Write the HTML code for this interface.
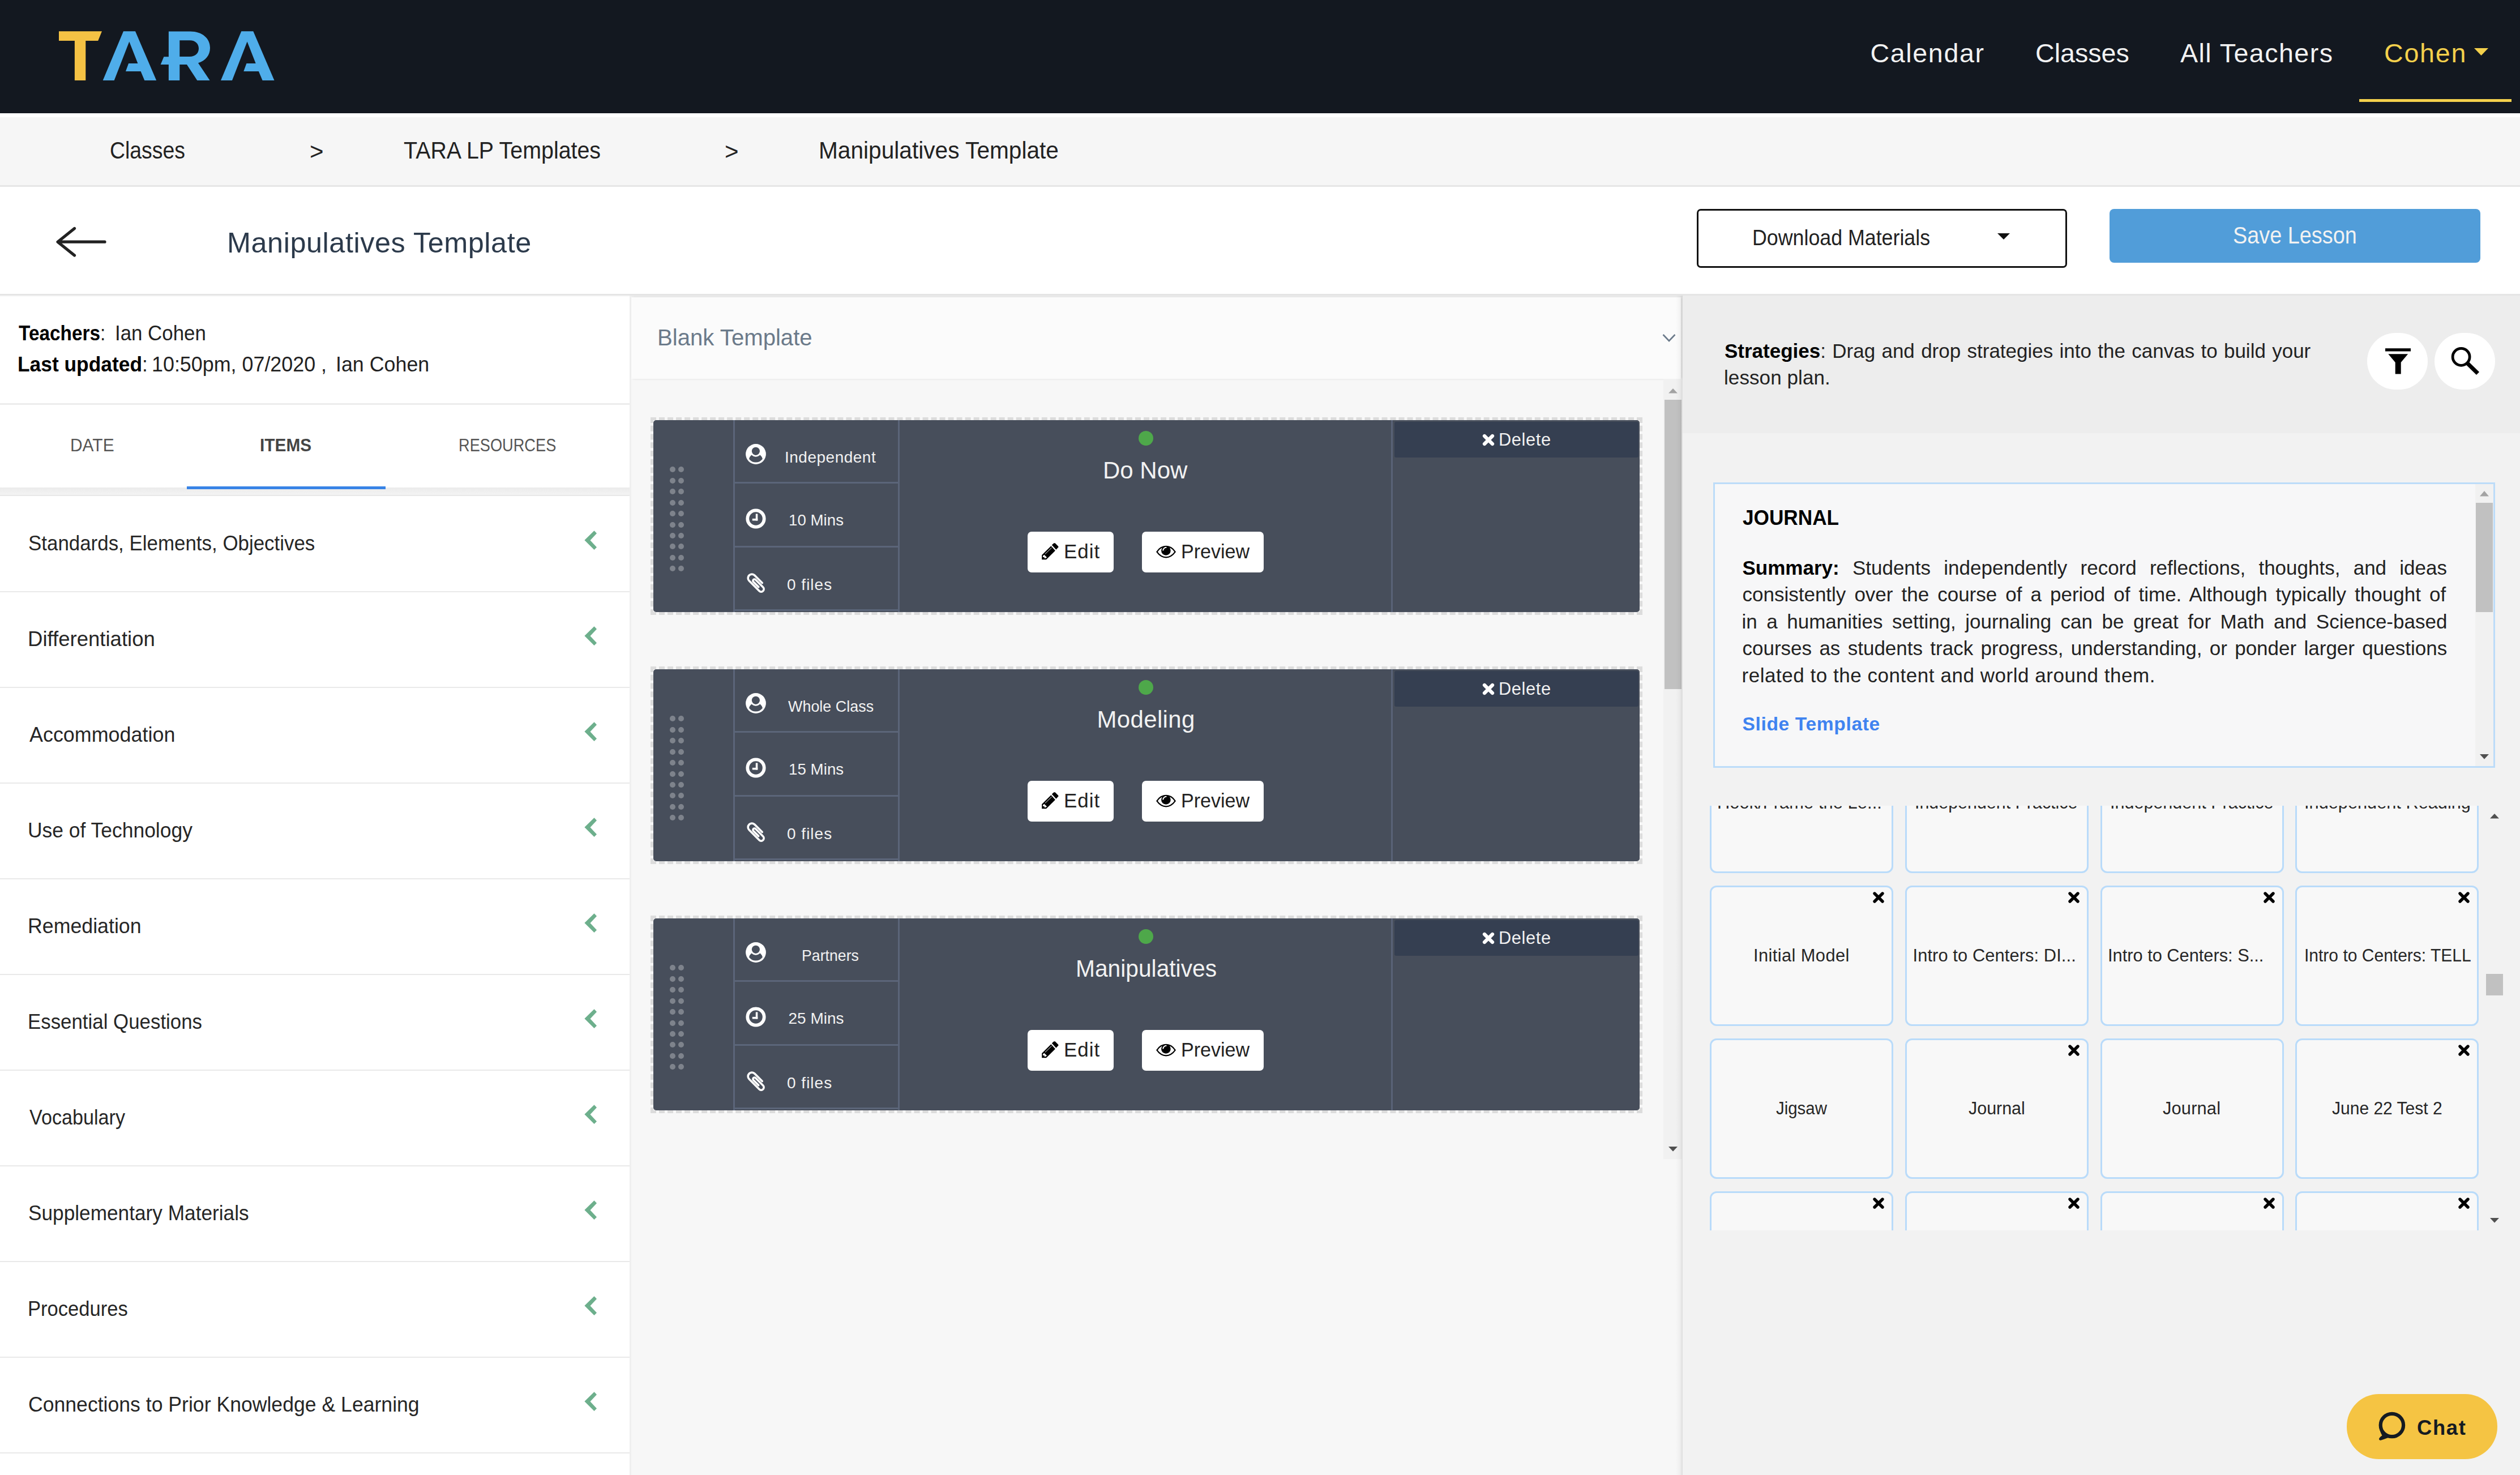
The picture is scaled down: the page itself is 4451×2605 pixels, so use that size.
<!DOCTYPE html><html><head><meta charset="utf-8"><title>TARA - Manipulatives Template</title><style>
*{margin:0;padding:0}
html,body{width:4451px;height:2605px;overflow:hidden;background:#fff}
body{position:relative;font-family:"Liberation Sans",sans-serif}
body div{position:absolute}
.t{white-space:nowrap;line-height:1}
.t b{font-weight:700}

</style></head><body>
<div style="left:0px;top:0px;width:4451px;height:200px;background:#131820;"></div>
<div style="left:0px;top:200px;width:4451px;height:7px;background:#ffffff;"></div>
<div style="left:0px;top:207px;width:4451px;height:120px;background:#f6f6f6;"></div>
<div style="left:0px;top:327px;width:4451px;height:3px;background:#e6e6e6;"></div>
<div style="left:0px;top:330px;width:4451px;height:189px;background:#ffffff;"></div>
<div style="left:0px;top:519px;width:4451px;height:3px;background:#e5e5e5;"></div>
<div style="left:0px;top:522px;width:1112px;height:2083px;background:#ffffff;"></div>
<div style="left:0px;top:522px;width:1112px;height:2px;background:#f8f8f8;"></div>
<div style="left:1112px;top:522px;width:3px;height:2083px;background:#efefef;"></div>
<div style="left:1115px;top:522px;width:1857px;height:2083px;background:#f7f7f7;"></div>
<div style="left:1115px;top:522px;width:1857px;height:3px;background:#efefef;"></div>
<div style="left:1115px;top:525px;width:1854px;height:144px;background:#fbfbfb;box-shadow: 2px 0 4px rgba(0,0,0,0.10);"></div>
<div style="left:2972px;top:522px;width:1479px;height:2083px;background:#f2f2f2;"></div>
<div style="left:2972px;top:522px;width:1479px;height:243px;background:#ededed;"></div>
<svg style="position:absolute;left:0px;top:0px;overflow:visible" width="500" height="200" viewBox="0 0 500 200">
<polygon fill="#f5c244" points="104,55.3 180,55.3 173.2,72 151.3,72 151.3,142 131.9,142 131.9,72 104,72"/>
<polygon fill="#4fadea" points="181.7,142 218,55.3 239,55.3 276.2,142 255.3,142 248.6,126 222,126 227.1,112 243.4,112 228.3,73.6 201.7,142"/>
<path fill="#4fadea" fill-rule="evenodd" d="M297.9,55.5 H336 C357,55.5 371,67.5 371,84.5 C371,97.5 363,107.5 350,111.3 L370.6,142 H348.3 L330,114.1 H317.3 V142 H297.9 V114.1 H283.7 L289.4,100.2 H297.9 Z M317.3,71.2 H335 C345.5,71.2 351,77.5 351,85.6 C351,94 345.5,100 335,100 H317.3 Z"/>
<polygon fill="#4fadea" transform="translate(208.3,0)" points="181.7,142 218,55.3 239,55.3 276.2,142 255.3,142 248.6,126 222,126 227.1,112 243.4,112 228.3,73.6 201.7,142"/>
</svg>
<svg style="position:absolute;left:4370px;top:85px;overflow:visible" width="25" height="13" viewBox="0 0 25 13"><polygon fill="#f4d04c" points="0,0 25,0 12.5,13"/></svg>
<div style="left:4167px;top:175px;width:269px;height:5px;background:#f4d04c;"></div>
<svg style="position:absolute;left:95px;top:396px;overflow:visible" width="100" height="62" viewBox="0 0 100 62"><path d="M90,31.2 H8 M36.5,7.5 L7,31.2 L36.5,55" fill="none" stroke="#222" stroke-width="5.2" stroke-linecap="round" stroke-linejoin="round"/></svg>
<div style="left:2996.6px;top:369px;width:654px;height:104px;background:#ffffff;box-sizing:border-box;border:3px solid #111;border-radius:7px;"></div>
<svg style="position:absolute;left:3528px;top:412px;overflow:visible" width="22" height="11" viewBox="0 0 22 11"><polygon fill="#111" points="0,0 22,0 11,11"/></svg>
<div style="left:3726px;top:369px;width:655px;height:95px;background:#519dd9;border-radius:8px;"></div>
<div style="left:0px;top:712px;width:1112px;height:3px;background:#ececec;"></div>
<div style="left:0px;top:861px;width:1112px;height:14px;background:linear-gradient(#ebebeb,#f4f4f4);"></div>
<div style="left:0px;top:874px;width:1112px;height:2px;background:#e8e8e8;"></div>
<div style="left:330px;top:858.5px;width:351px;height:5.5px;background:#3783e6;"></div>
<svg style="position:absolute;left:1030px;top:935.6px;overflow:visible" width="26" height="36" viewBox="0 0 26 36"><polygon fill="#6daf8c" points="19.5,1.3 24,5.9 12.5,18.3 24,30.5 19.5,35.1 2.4,18.1"/></svg>
<div style="left:0px;top:1043.6px;width:1112px;height:2.5px;background:#e9e9e9;"></div>
<svg style="position:absolute;left:1030px;top:1104.6px;overflow:visible" width="26" height="36" viewBox="0 0 26 36"><polygon fill="#6daf8c" points="19.5,1.3 24,5.9 12.5,18.3 24,30.5 19.5,35.1 2.4,18.1"/></svg>
<div style="left:0px;top:1212.6px;width:1112px;height:2.5px;background:#e9e9e9;"></div>
<svg style="position:absolute;left:1030px;top:1273.6px;overflow:visible" width="26" height="36" viewBox="0 0 26 36"><polygon fill="#6daf8c" points="19.5,1.3 24,5.9 12.5,18.3 24,30.5 19.5,35.1 2.4,18.1"/></svg>
<div style="left:0px;top:1381.6px;width:1112px;height:2.5px;background:#e9e9e9;"></div>
<svg style="position:absolute;left:1030px;top:1442.6px;overflow:visible" width="26" height="36" viewBox="0 0 26 36"><polygon fill="#6daf8c" points="19.5,1.3 24,5.9 12.5,18.3 24,30.5 19.5,35.1 2.4,18.1"/></svg>
<div style="left:0px;top:1550.6px;width:1112px;height:2.5px;background:#e9e9e9;"></div>
<svg style="position:absolute;left:1030px;top:1611.6px;overflow:visible" width="26" height="36" viewBox="0 0 26 36"><polygon fill="#6daf8c" points="19.5,1.3 24,5.9 12.5,18.3 24,30.5 19.5,35.1 2.4,18.1"/></svg>
<div style="left:0px;top:1719.6px;width:1112px;height:2.5px;background:#e9e9e9;"></div>
<svg style="position:absolute;left:1030px;top:1780.6px;overflow:visible" width="26" height="36" viewBox="0 0 26 36"><polygon fill="#6daf8c" points="19.5,1.3 24,5.9 12.5,18.3 24,30.5 19.5,35.1 2.4,18.1"/></svg>
<div style="left:0px;top:1888.6px;width:1112px;height:2.5px;background:#e9e9e9;"></div>
<svg style="position:absolute;left:1030px;top:1949.6px;overflow:visible" width="26" height="36" viewBox="0 0 26 36"><polygon fill="#6daf8c" points="19.5,1.3 24,5.9 12.5,18.3 24,30.5 19.5,35.1 2.4,18.1"/></svg>
<div style="left:0px;top:2057.6px;width:1112px;height:2.5px;background:#e9e9e9;"></div>
<svg style="position:absolute;left:1030px;top:2118.6px;overflow:visible" width="26" height="36" viewBox="0 0 26 36"><polygon fill="#6daf8c" points="19.5,1.3 24,5.9 12.5,18.3 24,30.5 19.5,35.1 2.4,18.1"/></svg>
<div style="left:0px;top:2226.6px;width:1112px;height:2.5px;background:#e9e9e9;"></div>
<svg style="position:absolute;left:1030px;top:2287.6px;overflow:visible" width="26" height="36" viewBox="0 0 26 36"><polygon fill="#6daf8c" points="19.5,1.3 24,5.9 12.5,18.3 24,30.5 19.5,35.1 2.4,18.1"/></svg>
<div style="left:0px;top:2395.6px;width:1112px;height:2.5px;background:#e9e9e9;"></div>
<svg style="position:absolute;left:1030px;top:2456.6px;overflow:visible" width="26" height="36" viewBox="0 0 26 36"><polygon fill="#6daf8c" points="19.5,1.3 24,5.9 12.5,18.3 24,30.5 19.5,35.1 2.4,18.1"/></svg>
<div style="left:0px;top:2564.6px;width:1112px;height:2.5px;background:#e9e9e9;"></div>
<svg style="position:absolute;left:2935px;top:589px;overflow:visible" width="26" height="16" viewBox="0 0 26 16"><polyline points="2.5,2 13,13 23.5,2" fill="none" stroke="#6b7a8a" stroke-width="2.6"/></svg>
<div style="left:2938px;top:669px;width:33px;height:1378px;background:#f1f1f1;"></div>
<svg style="position:absolute;left:2947px;top:685.8px;overflow:visible" width="16" height="8.5" viewBox="0 0 16 8.5"><polygon fill="#a3a3a3" points="0,8.5 16,8.5 8,0"/></svg>
<div style="left:2940px;top:706px;width:30px;height:511px;background:#c1c1c1;"></div>
<svg style="position:absolute;left:2947px;top:2024.6px;overflow:visible" width="16" height="8.5" viewBox="0 0 16 8.5"><polygon fill="#505050" points="0,0 16,0 8,8.5"/></svg>
<div style="left:2960px;top:522px;width:12px;height:2083px;background:linear-gradient(to right, rgba(0,0,0,0), rgba(0,0,0,0.03) 60%, rgba(0,0,0,0.10));"></div>
<div style="left:1149px;top:737.1px;width:1752px;height:348.7px;background:transparent;box-sizing:border-box;border:5px dashed #dcdcdc;"></div>
<div style="left:1154px;top:741.8px;width:1742px;height:339.5px;background:#474e5b;border-radius:5px;"></div>
<div style="left:1182.5px;top:824.4px;width:10px;height:10px;background:#7e838c;border-radius:50%;"></div>
<div style="left:1198px;top:824.4px;width:10px;height:10px;background:#7e838c;border-radius:50%;"></div>
<div style="left:1182.5px;top:843.8px;width:10px;height:10px;background:#7e838c;border-radius:50%;"></div>
<div style="left:1198px;top:843.8px;width:10px;height:10px;background:#7e838c;border-radius:50%;"></div>
<div style="left:1182.5px;top:863.2px;width:10px;height:10px;background:#7e838c;border-radius:50%;"></div>
<div style="left:1198px;top:863.2px;width:10px;height:10px;background:#7e838c;border-radius:50%;"></div>
<div style="left:1182.5px;top:882.7px;width:10px;height:10px;background:#7e838c;border-radius:50%;"></div>
<div style="left:1198px;top:882.7px;width:10px;height:10px;background:#7e838c;border-radius:50%;"></div>
<div style="left:1182.5px;top:902.1px;width:10px;height:10px;background:#7e838c;border-radius:50%;"></div>
<div style="left:1198px;top:902.1px;width:10px;height:10px;background:#7e838c;border-radius:50%;"></div>
<div style="left:1182.5px;top:921.5px;width:10px;height:10px;background:#7e838c;border-radius:50%;"></div>
<div style="left:1198px;top:921.5px;width:10px;height:10px;background:#7e838c;border-radius:50%;"></div>
<div style="left:1182.5px;top:940.9px;width:10px;height:10px;background:#7e838c;border-radius:50%;"></div>
<div style="left:1198px;top:940.9px;width:10px;height:10px;background:#7e838c;border-radius:50%;"></div>
<div style="left:1182.5px;top:960.3px;width:10px;height:10px;background:#7e838c;border-radius:50%;"></div>
<div style="left:1198px;top:960.3px;width:10px;height:10px;background:#7e838c;border-radius:50%;"></div>
<div style="left:1182.5px;top:979.8px;width:10px;height:10px;background:#7e838c;border-radius:50%;"></div>
<div style="left:1198px;top:979.8px;width:10px;height:10px;background:#7e838c;border-radius:50%;"></div>
<div style="left:1182.5px;top:999.2px;width:10px;height:10px;background:#7e838c;border-radius:50%;"></div>
<div style="left:1198px;top:999.2px;width:10px;height:10px;background:#7e838c;border-radius:50%;"></div>
<div style="left:1295px;top:741.8px;width:3px;height:339.5px;background:#5b6579;"></div>
<div style="left:1586px;top:741.8px;width:3px;height:339.5px;background:#5b6579;"></div>
<div style="left:1298px;top:851.0999999999999px;width:288px;height:3px;background:#5b6579;"></div>
<div style="left:1298px;top:963.9px;width:288px;height:3px;background:#5b6579;"></div>
<div style="left:1298px;top:1076.3px;width:288px;height:3px;background:#5b6579;"></div>
<svg style="position:absolute;left:1317px;top:784.3px;overflow:visible" width="36" height="36" viewBox="0 0 36 36"><circle cx="18" cy="18" r="17.9" fill="#fff"/><circle cx="17.9" cy="12.8" r="7.1" fill="#474e5b"/><path fill="#474e5b" d="M10.3,19.5 Q14,22.8 17.9,22.7 Q21.8,22.8 25.6,19.5 Q29,22.5 29.9,26.4 Q25,32.6 17.9,32.6 Q10.8,32.6 6,26.4 Q6.9,22.5 10.3,19.5 Z"/></svg>
<svg style="position:absolute;left:1317px;top:898.3px;overflow:visible" width="36" height="36" viewBox="0 0 36 36"><circle cx="18" cy="18" r="14.7" fill="none" stroke="#fff" stroke-width="5.8"/><rect x="17.8" y="9.5" width="3.5" height="12" fill="#fff"/><rect x="11.8" y="17.9" width="9.5" height="3.6" fill="#fff"/></svg>
<svg style="position:absolute;left:1312px;top:1006.8px;overflow:visible" width="46" height="46" viewBox="0 0 46 46"><g transform="translate(23.39,23.39) rotate(-45)"><path d="M8.3,7.05 L8.3,-11.85 A6.85,6.85 0 0 0 -5.4,-11.85 L-5.4,13.44 A4.7,4.7 0 0 0 4.0,13.44 L4.0,-5.35 A2.65,2.65 0 0 0 -1.3,-5.35 L-1.3,7.5" fill="none" stroke="#fff" stroke-width="3.6" stroke-linecap="round"/></g></svg>
<div style="left:2010.6px;top:760.8px;width:26px;height:26px;background:#4ea84a;border-radius:50%;"></div>
<div style="left:1815px;top:938.8px;width:152px;height:72px;background:#ffffff;border-radius:7px;"></div>
<svg style="position:absolute;left:1830px;top:949.8px;overflow:visible" width="50" height="50" viewBox="0 0 50 50"><polygon fill="#000" points="27.8,12.5 31.5,9.2 33.6,9.2 39.3,14.9 39.3,16.6 35.4,20.7"/><polygon fill="#000" points="26.4,14.2 33.9,22.4 18,38.3 10.2,38.3 10.2,30.2"/><line x1="15.9" y1="28.5" x2="27.5" y2="17.3" stroke="#fff" stroke-width="1"/><polygon fill="#fff" points="12,32 14.2,29.8 19,34.2 17,35.9 14.6,35.9 14.6,33.9 12,33.9"/></svg>
<div style="left:2017px;top:938.8px;width:215px;height:72px;background:#ffffff;border-radius:7px;"></div>
<svg style="position:absolute;left:2036px;top:949.8px;overflow:visible" width="50" height="50" viewBox="0 0 50 50"><path d="M7.4,24.6 C12,17.5 17,14.9 23.6,14.9 C30,14.9 35,17.5 39.7,24.6 C35,31 30,34.3 23.6,34.3 C17,34.3 12,31 7.4,24.6 Z" fill="none" stroke="#000" stroke-width="2.2" stroke-linejoin="round"/><circle cx="23.4" cy="22.4" r="8.3" fill="#000"/><path d="M18.3,22.4 A5.6,5.6 0 0 1 24.4,16.9" fill="none" stroke="#fff" stroke-width="2"/></svg>
<div style="left:2457px;top:741.8px;width:3px;height:339.5px;background:#596377;"></div>
<div style="left:2462.8px;top:744.8px;width:431px;height:63.4px;background:#353f51;border-radius:3px;"></div>
<svg style="position:absolute;left:2618px;top:766.3px;overflow:visible" width="22" height="22" viewBox="0 0 22 22"><path d="M4,4 L18,18 M18,4 L4,18" stroke="#fff" stroke-width="6.2" stroke-linecap="round"/></svg>
<div style="left:1149px;top:1177.1px;width:1752px;height:348.7px;background:transparent;box-sizing:border-box;border:5px dashed #dcdcdc;"></div>
<div style="left:1154px;top:1181.8px;width:1742px;height:339.5px;background:#474e5b;border-radius:5px;"></div>
<div style="left:1182.5px;top:1264.4px;width:10px;height:10px;background:#7e838c;border-radius:50%;"></div>
<div style="left:1198px;top:1264.4px;width:10px;height:10px;background:#7e838c;border-radius:50%;"></div>
<div style="left:1182.5px;top:1283.8px;width:10px;height:10px;background:#7e838c;border-radius:50%;"></div>
<div style="left:1198px;top:1283.8px;width:10px;height:10px;background:#7e838c;border-radius:50%;"></div>
<div style="left:1182.5px;top:1303.2px;width:10px;height:10px;background:#7e838c;border-radius:50%;"></div>
<div style="left:1198px;top:1303.2px;width:10px;height:10px;background:#7e838c;border-radius:50%;"></div>
<div style="left:1182.5px;top:1322.7px;width:10px;height:10px;background:#7e838c;border-radius:50%;"></div>
<div style="left:1198px;top:1322.7px;width:10px;height:10px;background:#7e838c;border-radius:50%;"></div>
<div style="left:1182.5px;top:1342.1px;width:10px;height:10px;background:#7e838c;border-radius:50%;"></div>
<div style="left:1198px;top:1342.1px;width:10px;height:10px;background:#7e838c;border-radius:50%;"></div>
<div style="left:1182.5px;top:1361.5px;width:10px;height:10px;background:#7e838c;border-radius:50%;"></div>
<div style="left:1198px;top:1361.5px;width:10px;height:10px;background:#7e838c;border-radius:50%;"></div>
<div style="left:1182.5px;top:1380.9px;width:10px;height:10px;background:#7e838c;border-radius:50%;"></div>
<div style="left:1198px;top:1380.9px;width:10px;height:10px;background:#7e838c;border-radius:50%;"></div>
<div style="left:1182.5px;top:1400.3px;width:10px;height:10px;background:#7e838c;border-radius:50%;"></div>
<div style="left:1198px;top:1400.3px;width:10px;height:10px;background:#7e838c;border-radius:50%;"></div>
<div style="left:1182.5px;top:1419.8px;width:10px;height:10px;background:#7e838c;border-radius:50%;"></div>
<div style="left:1198px;top:1419.8px;width:10px;height:10px;background:#7e838c;border-radius:50%;"></div>
<div style="left:1182.5px;top:1439.2px;width:10px;height:10px;background:#7e838c;border-radius:50%;"></div>
<div style="left:1198px;top:1439.2px;width:10px;height:10px;background:#7e838c;border-radius:50%;"></div>
<div style="left:1295px;top:1181.8px;width:3px;height:339.5px;background:#5b6579;"></div>
<div style="left:1586px;top:1181.8px;width:3px;height:339.5px;background:#5b6579;"></div>
<div style="left:1298px;top:1291.1px;width:288px;height:3px;background:#5b6579;"></div>
<div style="left:1298px;top:1403.8999999999999px;width:288px;height:3px;background:#5b6579;"></div>
<div style="left:1298px;top:1516.3px;width:288px;height:3px;background:#5b6579;"></div>
<svg style="position:absolute;left:1317px;top:1224.3px;overflow:visible" width="36" height="36" viewBox="0 0 36 36"><circle cx="18" cy="18" r="17.9" fill="#fff"/><circle cx="17.9" cy="12.8" r="7.1" fill="#474e5b"/><path fill="#474e5b" d="M10.3,19.5 Q14,22.8 17.9,22.7 Q21.8,22.8 25.6,19.5 Q29,22.5 29.9,26.4 Q25,32.6 17.9,32.6 Q10.8,32.6 6,26.4 Q6.9,22.5 10.3,19.5 Z"/></svg>
<svg style="position:absolute;left:1317px;top:1338.3px;overflow:visible" width="36" height="36" viewBox="0 0 36 36"><circle cx="18" cy="18" r="14.7" fill="none" stroke="#fff" stroke-width="5.8"/><rect x="17.8" y="9.5" width="3.5" height="12" fill="#fff"/><rect x="11.8" y="17.9" width="9.5" height="3.6" fill="#fff"/></svg>
<svg style="position:absolute;left:1312px;top:1446.8px;overflow:visible" width="46" height="46" viewBox="0 0 46 46"><g transform="translate(23.39,23.39) rotate(-45)"><path d="M8.3,7.05 L8.3,-11.85 A6.85,6.85 0 0 0 -5.4,-11.85 L-5.4,13.44 A4.7,4.7 0 0 0 4.0,13.44 L4.0,-5.35 A2.65,2.65 0 0 0 -1.3,-5.35 L-1.3,7.5" fill="none" stroke="#fff" stroke-width="3.6" stroke-linecap="round"/></g></svg>
<div style="left:2010.6px;top:1200.8px;width:26px;height:26px;background:#4ea84a;border-radius:50%;"></div>
<div style="left:1815px;top:1378.8px;width:152px;height:72px;background:#ffffff;border-radius:7px;"></div>
<svg style="position:absolute;left:1830px;top:1389.8px;overflow:visible" width="50" height="50" viewBox="0 0 50 50"><polygon fill="#000" points="27.8,12.5 31.5,9.2 33.6,9.2 39.3,14.9 39.3,16.6 35.4,20.7"/><polygon fill="#000" points="26.4,14.2 33.9,22.4 18,38.3 10.2,38.3 10.2,30.2"/><line x1="15.9" y1="28.5" x2="27.5" y2="17.3" stroke="#fff" stroke-width="1"/><polygon fill="#fff" points="12,32 14.2,29.8 19,34.2 17,35.9 14.6,35.9 14.6,33.9 12,33.9"/></svg>
<div style="left:2017px;top:1378.8px;width:215px;height:72px;background:#ffffff;border-radius:7px;"></div>
<svg style="position:absolute;left:2036px;top:1389.8px;overflow:visible" width="50" height="50" viewBox="0 0 50 50"><path d="M7.4,24.6 C12,17.5 17,14.9 23.6,14.9 C30,14.9 35,17.5 39.7,24.6 C35,31 30,34.3 23.6,34.3 C17,34.3 12,31 7.4,24.6 Z" fill="none" stroke="#000" stroke-width="2.2" stroke-linejoin="round"/><circle cx="23.4" cy="22.4" r="8.3" fill="#000"/><path d="M18.3,22.4 A5.6,5.6 0 0 1 24.4,16.9" fill="none" stroke="#fff" stroke-width="2"/></svg>
<div style="left:2457px;top:1181.8px;width:3px;height:339.5px;background:#596377;"></div>
<div style="left:2462.8px;top:1184.8px;width:431px;height:63.4px;background:#353f51;border-radius:3px;"></div>
<svg style="position:absolute;left:2618px;top:1206.3px;overflow:visible" width="22" height="22" viewBox="0 0 22 22"><path d="M4,4 L18,18 M18,4 L4,18" stroke="#fff" stroke-width="6.2" stroke-linecap="round"/></svg>
<div style="left:1149px;top:1617.1px;width:1752px;height:348.7px;background:transparent;box-sizing:border-box;border:5px dashed #dcdcdc;"></div>
<div style="left:1154px;top:1621.8px;width:1742px;height:339.5px;background:#474e5b;border-radius:5px;"></div>
<div style="left:1182.5px;top:1704.4px;width:10px;height:10px;background:#7e838c;border-radius:50%;"></div>
<div style="left:1198px;top:1704.4px;width:10px;height:10px;background:#7e838c;border-radius:50%;"></div>
<div style="left:1182.5px;top:1723.8px;width:10px;height:10px;background:#7e838c;border-radius:50%;"></div>
<div style="left:1198px;top:1723.8px;width:10px;height:10px;background:#7e838c;border-radius:50%;"></div>
<div style="left:1182.5px;top:1743.2px;width:10px;height:10px;background:#7e838c;border-radius:50%;"></div>
<div style="left:1198px;top:1743.2px;width:10px;height:10px;background:#7e838c;border-radius:50%;"></div>
<div style="left:1182.5px;top:1762.7px;width:10px;height:10px;background:#7e838c;border-radius:50%;"></div>
<div style="left:1198px;top:1762.7px;width:10px;height:10px;background:#7e838c;border-radius:50%;"></div>
<div style="left:1182.5px;top:1782.1px;width:10px;height:10px;background:#7e838c;border-radius:50%;"></div>
<div style="left:1198px;top:1782.1px;width:10px;height:10px;background:#7e838c;border-radius:50%;"></div>
<div style="left:1182.5px;top:1801.5px;width:10px;height:10px;background:#7e838c;border-radius:50%;"></div>
<div style="left:1198px;top:1801.5px;width:10px;height:10px;background:#7e838c;border-radius:50%;"></div>
<div style="left:1182.5px;top:1820.9px;width:10px;height:10px;background:#7e838c;border-radius:50%;"></div>
<div style="left:1198px;top:1820.9px;width:10px;height:10px;background:#7e838c;border-radius:50%;"></div>
<div style="left:1182.5px;top:1840.3px;width:10px;height:10px;background:#7e838c;border-radius:50%;"></div>
<div style="left:1198px;top:1840.3px;width:10px;height:10px;background:#7e838c;border-radius:50%;"></div>
<div style="left:1182.5px;top:1859.8px;width:10px;height:10px;background:#7e838c;border-radius:50%;"></div>
<div style="left:1198px;top:1859.8px;width:10px;height:10px;background:#7e838c;border-radius:50%;"></div>
<div style="left:1182.5px;top:1879.2px;width:10px;height:10px;background:#7e838c;border-radius:50%;"></div>
<div style="left:1198px;top:1879.2px;width:10px;height:10px;background:#7e838c;border-radius:50%;"></div>
<div style="left:1295px;top:1621.8px;width:3px;height:339.5px;background:#5b6579;"></div>
<div style="left:1586px;top:1621.8px;width:3px;height:339.5px;background:#5b6579;"></div>
<div style="left:1298px;top:1731.1px;width:288px;height:3px;background:#5b6579;"></div>
<div style="left:1298px;top:1843.8999999999999px;width:288px;height:3px;background:#5b6579;"></div>
<div style="left:1298px;top:1956.3px;width:288px;height:3px;background:#5b6579;"></div>
<svg style="position:absolute;left:1317px;top:1664.3px;overflow:visible" width="36" height="36" viewBox="0 0 36 36"><circle cx="18" cy="18" r="17.9" fill="#fff"/><circle cx="17.9" cy="12.8" r="7.1" fill="#474e5b"/><path fill="#474e5b" d="M10.3,19.5 Q14,22.8 17.9,22.7 Q21.8,22.8 25.6,19.5 Q29,22.5 29.9,26.4 Q25,32.6 17.9,32.6 Q10.8,32.6 6,26.4 Q6.9,22.5 10.3,19.5 Z"/></svg>
<svg style="position:absolute;left:1317px;top:1778.3px;overflow:visible" width="36" height="36" viewBox="0 0 36 36"><circle cx="18" cy="18" r="14.7" fill="none" stroke="#fff" stroke-width="5.8"/><rect x="17.8" y="9.5" width="3.5" height="12" fill="#fff"/><rect x="11.8" y="17.9" width="9.5" height="3.6" fill="#fff"/></svg>
<svg style="position:absolute;left:1312px;top:1886.8px;overflow:visible" width="46" height="46" viewBox="0 0 46 46"><g transform="translate(23.39,23.39) rotate(-45)"><path d="M8.3,7.05 L8.3,-11.85 A6.85,6.85 0 0 0 -5.4,-11.85 L-5.4,13.44 A4.7,4.7 0 0 0 4.0,13.44 L4.0,-5.35 A2.65,2.65 0 0 0 -1.3,-5.35 L-1.3,7.5" fill="none" stroke="#fff" stroke-width="3.6" stroke-linecap="round"/></g></svg>
<div style="left:2010.6px;top:1640.8px;width:26px;height:26px;background:#4ea84a;border-radius:50%;"></div>
<div style="left:1815px;top:1818.8px;width:152px;height:72px;background:#ffffff;border-radius:7px;"></div>
<svg style="position:absolute;left:1830px;top:1829.8px;overflow:visible" width="50" height="50" viewBox="0 0 50 50"><polygon fill="#000" points="27.8,12.5 31.5,9.2 33.6,9.2 39.3,14.9 39.3,16.6 35.4,20.7"/><polygon fill="#000" points="26.4,14.2 33.9,22.4 18,38.3 10.2,38.3 10.2,30.2"/><line x1="15.9" y1="28.5" x2="27.5" y2="17.3" stroke="#fff" stroke-width="1"/><polygon fill="#fff" points="12,32 14.2,29.8 19,34.2 17,35.9 14.6,35.9 14.6,33.9 12,33.9"/></svg>
<div style="left:2017px;top:1818.8px;width:215px;height:72px;background:#ffffff;border-radius:7px;"></div>
<svg style="position:absolute;left:2036px;top:1829.8px;overflow:visible" width="50" height="50" viewBox="0 0 50 50"><path d="M7.4,24.6 C12,17.5 17,14.9 23.6,14.9 C30,14.9 35,17.5 39.7,24.6 C35,31 30,34.3 23.6,34.3 C17,34.3 12,31 7.4,24.6 Z" fill="none" stroke="#000" stroke-width="2.2" stroke-linejoin="round"/><circle cx="23.4" cy="22.4" r="8.3" fill="#000"/><path d="M18.3,22.4 A5.6,5.6 0 0 1 24.4,16.9" fill="none" stroke="#fff" stroke-width="2"/></svg>
<div style="left:2457px;top:1621.8px;width:3px;height:339.5px;background:#596377;"></div>
<div style="left:2462.8px;top:1624.8px;width:431px;height:63.4px;background:#353f51;border-radius:3px;"></div>
<svg style="position:absolute;left:2618px;top:1646.3px;overflow:visible" width="22" height="22" viewBox="0 0 22 22"><path d="M4,4 L18,18 M18,4 L4,18" stroke="#fff" stroke-width="6.2" stroke-linecap="round"/></svg>
<div style="left:4181px;top:588px;width:107px;height:100px;background:#ffffff;border-radius:50px;"></div>
<svg style="position:absolute;left:4181px;top:588px;overflow:visible" width="107" height="100" viewBox="0 0 107 100"><rect x="32" y="27.2" width="45" height="5.3" fill="#000"/><polygon fill="#000" points="37.3,37.2 72.1,37.2 59.7,52 59.7,72.5 49.7,72.5 49.7,52"/></svg>
<div style="left:4300px;top:588px;width:107px;height:100px;background:#ffffff;border-radius:50px;"></div>
<svg style="position:absolute;left:4300px;top:588px;overflow:visible" width="107" height="100" viewBox="0 0 107 100"><circle cx="47.1" cy="42.3" r="15" fill="none" stroke="#000" stroke-width="4.8"/><path d="M57.5,53 L76.5,71.5" stroke="#000" stroke-width="7.2"/></svg>
<div style="left:3025.5px;top:852px;width:1381px;height:503.5px;background:#f7f7f8;box-sizing:border-box;border:3px solid #bcdcf9;"></div>
<div style="left:4372px;top:855.3px;width:32px;height:497.6px;background:#f1f1f1;"></div>
<svg style="position:absolute;left:4380px;top:867px;overflow:visible" width="16" height="9.6" viewBox="0 0 16 9.6"><polygon fill="#a3a3a3" points="0,9.6 16,9.6 8,0"/></svg>
<div style="left:4373px;top:887.6px;width:30px;height:193.4px;background:#c1c1c1;"></div>
<svg style="position:absolute;left:4380px;top:1331.8px;overflow:visible" width="16" height="8.7" viewBox="0 0 16 8.7"><polygon fill="#505050" points="0,0 16,0 8,8.7"/></svg>
<svg style="position:absolute;left:4398px;top:1436.6px;overflow:visible" width="16" height="8.5" viewBox="0 0 16 8.5"><polygon fill="#505050" points="0,8.5 16,8.5 8,0"/></svg>
<div style="left:4391.4px;top:1719.7px;width:29.6px;height:38.8px;background:#c1c1c1;"></div>
<svg style="position:absolute;left:4398px;top:2150.8px;overflow:visible" width="16" height="8.5" viewBox="0 0 16 8.5"><polygon fill="#505050" points="0,0 16,0 8,8.5"/></svg>
<div style="left:4145px;top:2462px;width:266px;height:114.7px;background:#f5c443;border-radius:57px;"></div>
<svg style="position:absolute;left:4190px;top:2480px;overflow:visible" width="70" height="70" viewBox="0 0 70 70"><circle cx="34.9" cy="37" r="20.2" fill="none" stroke="#151b22" stroke-width="6.2"/><path fill="#151b22" d="M13.5,46 L20,49.5 Q23,53 23.8,55 L30,54.2 L31,58 Q22,61.5 15,63.8 Q11.8,64 12,61 Q12.8,58.5 17.5,55.3 Q15,51 13.5,46 Z"/></svg>
<div style="left:2990px;top:1422.6px;width:1440px;height:750.4px;overflow:hidden;">
<div style="left:29.8px;top:-128.9px;width:324px;height:248px;box-sizing:border-box;border:3px solid #b9dbfa;border-radius:12px;background:#f8f8f8;"></div>
<div style="left:375.0px;top:-128.9px;width:324px;height:248px;box-sizing:border-box;border:3px solid #b9dbfa;border-radius:12px;background:#f8f8f8;"></div>
<div style="left:719.7px;top:-128.9px;width:324px;height:248px;box-sizing:border-box;border:3px solid #b9dbfa;border-radius:12px;background:#f8f8f8;"></div>
<div style="left:1064.3px;top:-128.9px;width:324px;height:248px;box-sizing:border-box;border:3px solid #b9dbfa;border-radius:12px;background:#f8f8f8;"></div>
<div style="left:29.8px;top:141.0px;width:324px;height:248px;box-sizing:border-box;border:3px solid #b9dbfa;border-radius:12px;background:#f8f8f8;"></div>
<svg style="position:absolute;left:316.7px;top:151.5px" width="22" height="22"><path d="M4,4 L18,18 M18,4 L4,18" stroke="#000" stroke-width="5.4" stroke-linecap="round"/></svg>
<div style="left:375.0px;top:141.0px;width:324px;height:248px;box-sizing:border-box;border:3px solid #b9dbfa;border-radius:12px;background:#f8f8f8;"></div>
<svg style="position:absolute;left:661.9px;top:151.5px" width="22" height="22"><path d="M4,4 L18,18 M18,4 L4,18" stroke="#000" stroke-width="5.4" stroke-linecap="round"/></svg>
<div style="left:719.7px;top:141.0px;width:324px;height:248px;box-sizing:border-box;border:3px solid #b9dbfa;border-radius:12px;background:#f8f8f8;"></div>
<svg style="position:absolute;left:1006.6px;top:151.5px" width="22" height="22"><path d="M4,4 L18,18 M18,4 L4,18" stroke="#000" stroke-width="5.4" stroke-linecap="round"/></svg>
<div style="left:1064.3px;top:141.0px;width:324px;height:248px;box-sizing:border-box;border:3px solid #b9dbfa;border-radius:12px;background:#f8f8f8;"></div>
<svg style="position:absolute;left:1351.2px;top:151.5px" width="22" height="22"><path d="M4,4 L18,18 M18,4 L4,18" stroke="#000" stroke-width="5.4" stroke-linecap="round"/></svg>
<div style="left:29.8px;top:411.1px;width:324px;height:248px;box-sizing:border-box;border:3px solid #b9dbfa;border-radius:12px;background:#f8f8f8;"></div>
<div style="left:375.0px;top:411.1px;width:324px;height:248px;box-sizing:border-box;border:3px solid #b9dbfa;border-radius:12px;background:#f8f8f8;"></div>
<svg style="position:absolute;left:661.9px;top:421.6px" width="22" height="22"><path d="M4,4 L18,18 M18,4 L4,18" stroke="#000" stroke-width="5.4" stroke-linecap="round"/></svg>
<div style="left:719.7px;top:411.1px;width:324px;height:248px;box-sizing:border-box;border:3px solid #b9dbfa;border-radius:12px;background:#f8f8f8;"></div>
<div style="left:1064.3px;top:411.1px;width:324px;height:248px;box-sizing:border-box;border:3px solid #b9dbfa;border-radius:12px;background:#f8f8f8;"></div>
<svg style="position:absolute;left:1351.2px;top:421.6px" width="22" height="22"><path d="M4,4 L18,18 M18,4 L4,18" stroke="#000" stroke-width="5.4" stroke-linecap="round"/></svg>
<div style="left:29.8px;top:681.4px;width:324px;height:248px;box-sizing:border-box;border:3px solid #b9dbfa;border-radius:12px;background:#f8f8f8;"></div>
<svg style="position:absolute;left:316.7px;top:691.9px" width="22" height="22"><path d="M4,4 L18,18 M18,4 L4,18" stroke="#000" stroke-width="5.4" stroke-linecap="round"/></svg>
<div style="left:375.0px;top:681.4px;width:324px;height:248px;box-sizing:border-box;border:3px solid #b9dbfa;border-radius:12px;background:#f8f8f8;"></div>
<svg style="position:absolute;left:661.9px;top:691.9px" width="22" height="22"><path d="M4,4 L18,18 M18,4 L4,18" stroke="#000" stroke-width="5.4" stroke-linecap="round"/></svg>
<div style="left:719.7px;top:681.4px;width:324px;height:248px;box-sizing:border-box;border:3px solid #b9dbfa;border-radius:12px;background:#f8f8f8;"></div>
<svg style="position:absolute;left:1006.6px;top:691.9px" width="22" height="22"><path d="M4,4 L18,18 M18,4 L4,18" stroke="#000" stroke-width="5.4" stroke-linecap="round"/></svg>
<div style="left:1064.3px;top:681.4px;width:324px;height:248px;box-sizing:border-box;border:3px solid #b9dbfa;border-radius:12px;background:#f8f8f8;"></div>
<svg style="position:absolute;left:1351.2px;top:691.9px" width="22" height="22"><path d="M4,4 L18,18 M18,4 L4,18" stroke="#000" stroke-width="5.4" stroke-linecap="round"/></svg>
<div class="t" style="left:43.00px;top:-19.77px;font-size:30.8px;color:#262626;letter-spacing:0.084px;">Hook/Frame the Le...</div>
<div class="t" style="left:392.00px;top:-19.77px;font-size:30.8px;color:#262626;transform:scaleX(0.9875);transform-origin:0 0;">Independent Practice</div>
<div class="t" style="left:737.00px;top:-19.77px;font-size:30.8px;color:#262626;transform:scaleX(0.9909);transform-origin:0 0;">Independent Practice</div>
<div class="t" style="left:1079.50px;top:-19.77px;font-size:30.8px;color:#262626;transform:scaleX(0.9979);transform-origin:0 0;">Independent Reading</div>
<div class="t" style="left:107.00px;top:250.13px;font-size:30.8px;color:#262626;letter-spacing:0.417px;">Initial Model</div>
<div class="t" style="left:388.50px;top:250.13px;font-size:30.8px;color:#262626;letter-spacing:0.109px;">Intro to Centers: DI...</div>
<div class="t" style="left:733.00px;top:250.13px;font-size:30.8px;color:#262626;transform:scaleX(0.9993);transform-origin:0 0;">Intro to Centers: S...</div>
<div class="t" style="left:1079.50px;top:250.13px;font-size:30.8px;color:#262626;transform:scaleX(0.9746);transform-origin:0 0;">Intro to Centers: TELL</div>
<div class="t" style="left:147.00px;top:520.23px;font-size:30.8px;color:#262626;transform:scaleX(0.9549);transform-origin:0 0;">Jigsaw</div>
<div class="t" style="left:487.00px;top:520.23px;font-size:30.8px;color:#262626;transform:scaleX(0.9878);transform-origin:0 0;">Journal</div>
<div class="t" style="left:830.00px;top:520.23px;font-size:30.8px;color:#262626;letter-spacing:0.167px;">Journal</div>
<div class="t" style="left:1129.00px;top:520.23px;font-size:30.8px;color:#262626;transform:scaleX(0.9746);transform-origin:0 0;">June 22 Test 2</div>
</div>
<div class="t" style="left:3303.50px;top:70.54px;font-size:46.62px;color:#f2f2f2;letter-spacing:1.629px;">Calendar</div>
<div class="t" style="left:3595.00px;top:70.54px;font-size:46.62px;color:#f2f2f2;">Classes</div>
<div class="t" style="left:3851.00px;top:70.54px;font-size:46.62px;color:#f2f2f2;letter-spacing:1.455px;">All Teachers</div>
<div class="t" style="left:4211.00px;top:70.54px;font-size:46.62px;color:#f4d04c;letter-spacing:1.750px;">Cohen</div>
<div class="t" style="left:194.00px;top:244.95px;font-size:42.0px;color:#222;transform:scaleX(0.8904);transform-origin:0 0;">Classes</div>
<div class="t" style="left:547.00px;top:246.95px;font-size:42.0px;color:#222;">&gt;</div>
<div class="t" style="left:712.50px;top:244.95px;font-size:42.0px;color:#222;transform:scaleX(0.9377);transform-origin:0 0;">TARA LP Templates</div>
<div class="t" style="left:1280.00px;top:246.95px;font-size:42.0px;color:#222;">&gt;</div>
<div class="t" style="left:1446.00px;top:244.95px;font-size:42.0px;color:#222;transform:scaleX(0.9677);transform-origin:0 0;">Manipulatives Template</div>
<div class="t" style="left:401.00px;top:404.04px;font-size:50.4px;color:#2c3a4b;letter-spacing:0.552px;">Manipulatives Template</div>
<div class="t" style="left:3095.00px;top:400.97px;font-size:38.78px;color:#222;transform:scaleX(0.9226);transform-origin:0 0;">Download Materials</div>
<div class="t" style="left:3944.00px;top:394.30px;font-size:43.12px;color:#f2f2f2;transform:scaleX(0.8776);transform-origin:0 0;">Save Lesson</div>
<div class="t" style="left:33.00px;top:570.00px;font-size:37.8px;color:#222;transform:scaleX(0.8828);transform-origin:0 0;"><b style="color:#000">Teachers</b>:</div>
<div class="t" style="left:203.00px;top:570.00px;font-size:37.8px;color:#222;transform:scaleX(0.9218);transform-origin:0 0;">Ian Cohen</div>
<div class="t" style="left:31.00px;top:625.00px;font-size:37.8px;color:#222;transform:scaleX(0.9354);transform-origin:0 0;"><b style="color:#000">Last updated</b>:</div>
<div class="t" style="left:268.00px;top:625.00px;font-size:37.8px;color:#222;transform:scaleX(0.9488);transform-origin:0 0;">10:50pm, 07/2020 ,</div>
<div class="t" style="left:593.00px;top:625.00px;font-size:37.8px;color:#222;transform:scaleX(0.9471);transform-origin:0 0;">Ian Cohen</div>
<div class="t" style="left:123.50px;top:769.74px;font-size:32.2px;color:#555555;transform:scaleX(0.9300);transform-origin:0 0;">DATE</div>
<div class="t" style="left:459.00px;top:769.74px;font-size:32.2px;color:#454545;font-weight:700;transform:scaleX(0.9263);transform-origin:0 0;">ITEMS</div>
<div class="t" style="left:809.50px;top:769.74px;font-size:32.2px;color:#555555;transform:scaleX(0.8450);transform-origin:0 0;">RESOURCES</div>
<div class="t" style="left:50.00px;top:940.59px;font-size:37.1px;color:#262626;transform:scaleX(0.9413);transform-origin:0 0;">Standards, Elements, Objectives</div>
<div class="t" style="left:49.00px;top:1109.59px;font-size:37.1px;color:#262626;transform:scaleX(0.9856);transform-origin:0 0;">Differentiation</div>
<div class="t" style="left:52.00px;top:1278.59px;font-size:37.1px;color:#262626;transform:scaleX(0.9681);transform-origin:0 0;">Accommodation</div>
<div class="t" style="left:49.00px;top:1447.59px;font-size:37.1px;color:#262626;transform:scaleX(0.9556);transform-origin:0 0;">Use of Technology</div>
<div class="t" style="left:49.00px;top:1616.59px;font-size:37.1px;color:#262626;transform:scaleX(0.9636);transform-origin:0 0;">Remediation</div>
<div class="t" style="left:49.00px;top:1785.59px;font-size:37.1px;color:#262626;transform:scaleX(0.9399);transform-origin:0 0;">Essential Questions</div>
<div class="t" style="left:52.00px;top:1954.59px;font-size:37.1px;color:#262626;transform:scaleX(0.9213);transform-origin:0 0;">Vocabulary</div>
<div class="t" style="left:50.00px;top:2123.59px;font-size:37.1px;color:#262626;transform:scaleX(0.9500);transform-origin:0 0;">Supplementary Materials</div>
<div class="t" style="left:49.00px;top:2292.59px;font-size:37.1px;color:#262626;transform:scaleX(0.9319);transform-origin:0 0;">Procedures</div>
<div class="t" style="left:50.00px;top:2461.59px;font-size:37.1px;color:#262626;transform:scaleX(0.9601);transform-origin:0 0;">Connections to Prior Knowledge &amp; Learning</div>
<div class="t" style="left:1161.00px;top:575.63px;font-size:40.6px;color:#6b7a8a;transform:scaleX(0.9890);transform-origin:0 0;">Blank Template</div>
<div class="t" style="left:1386.00px;top:793.60px;font-size:28.0px;color:#f2f2f2;letter-spacing:0.500px;">Independent</div>
<div class="t" style="left:1393.00px;top:905.40px;font-size:28.0px;color:#f2f2f2;transform:scaleX(0.9895);transform-origin:0 0;">10 Mins</div>
<div class="t" style="left:1390.00px;top:1019.10px;font-size:28.0px;color:#f2f2f2;letter-spacing:1.000px;">0 files</div>
<div class="t" style="left:1948.00px;top:810.05px;font-size:42.0px;color:#f2f2f2;">Do Now</div>
<div class="t" style="left:1879.00px;top:956.17px;font-size:35.0px;color:#222;letter-spacing:1.000px;">Edit</div>
<div class="t" style="left:2086.00px;top:956.17px;font-size:35.0px;color:#222;transform:scaleX(0.9722);transform-origin:0 0;">Preview</div>
<div class="t" style="left:2647.00px;top:761.73px;font-size:30.8px;color:#f2f2f2;letter-spacing:0.600px;">Delete</div>
<div class="t" style="left:1392.00px;top:1233.60px;font-size:28.0px;color:#f2f2f2;transform:scaleX(0.9615);transform-origin:0 0;">Whole Class</div>
<div class="t" style="left:1393.00px;top:1345.40px;font-size:28.0px;color:#f2f2f2;transform:scaleX(0.9916);transform-origin:0 0;">15 Mins</div>
<div class="t" style="left:1390.00px;top:1459.10px;font-size:28.0px;color:#f2f2f2;letter-spacing:1.000px;">0 files</div>
<div class="t" style="left:1937.50px;top:1250.05px;font-size:42.0px;color:#f2f2f2;letter-spacing:0.343px;">Modeling</div>
<div class="t" style="left:1879.00px;top:1396.17px;font-size:35.0px;color:#222;letter-spacing:1.000px;">Edit</div>
<div class="t" style="left:2086.00px;top:1396.17px;font-size:35.0px;color:#222;transform:scaleX(0.9722);transform-origin:0 0;">Preview</div>
<div class="t" style="left:2647.00px;top:1201.73px;font-size:30.8px;color:#f2f2f2;letter-spacing:0.600px;">Delete</div>
<div class="t" style="left:1416.00px;top:1673.60px;font-size:28.0px;color:#f2f2f2;transform:scaleX(0.9531);transform-origin:0 0;">Partners</div>
<div class="t" style="left:1392.50px;top:1785.40px;font-size:28.0px;color:#f2f2f2;">25 Mins</div>
<div class="t" style="left:1390.00px;top:1899.10px;font-size:28.0px;color:#f2f2f2;letter-spacing:1.000px;">0 files</div>
<div class="t" style="left:1899.50px;top:1690.05px;font-size:42.0px;color:#f2f2f2;transform:scaleX(0.9698);transform-origin:0 0;">Manipulatives</div>
<div class="t" style="left:1879.00px;top:1836.17px;font-size:35.0px;color:#222;letter-spacing:1.000px;">Edit</div>
<div class="t" style="left:2086.00px;top:1836.17px;font-size:35.0px;color:#222;transform:scaleX(0.9722);transform-origin:0 0;">Preview</div>
<div class="t" style="left:2647.00px;top:1641.73px;font-size:30.8px;color:#f2f2f2;letter-spacing:0.600px;">Delete</div>
<div class="t" style="left:3046.00px;top:602.07px;font-size:35.0px;color:#222;word-spacing:1.580px;"><b style="color:#000">Strategies</b>: Drag and drop strategies into the canvas to build your</div>
<div class="t" style="left:3045.00px;top:649.07px;font-size:35.0px;color:#222;letter-spacing:0.091px;">lesson plan.</div>
<div class="t" style="left:3077.50px;top:896.99px;font-size:36.4px;color:#222;transform:scaleX(0.9667);transform-origin:0 0;"><b style="color:#000">JOURNAL</b></div>
<div class="t" style="left:3077.50px;top:985.37px;font-size:35.0px;color:#222;word-spacing:13.514px;"><b style="color:#000">Summary:</b> Students independently record reflections, thoughts, and ideas</div>
<div class="t" style="left:3077.50px;top:1032.37px;font-size:35.0px;color:#222;word-spacing:5.300px;">consistently over the course of a period of time. Although typically thought of</div>
<div class="t" style="left:3076.50px;top:1080.17px;font-size:35.0px;color:#222;word-spacing:6.782px;">in a humanities setting, journaling can be great for Math and Science-based</div>
<div class="t" style="left:3077.50px;top:1126.97px;font-size:35.0px;color:#222;word-spacing:3.622px;">courses as students track progress, understanding, or ponder larger questions</div>
<div class="t" style="left:3076.50px;top:1174.57px;font-size:35.0px;color:#222;letter-spacing:0.536px;">related to the content and world around them.</div>
<div class="t" style="left:3077.50px;top:1261.56px;font-size:33.6px;color:#3f83f0;letter-spacing:0.631px;"><b>Slide Template</b></div>
<div class="t" style="left:4269.00px;top:2504.19px;font-size:36.4px;color:#151b22;letter-spacing:1.667px;"><b>Chat</b></div>
</body></html>
